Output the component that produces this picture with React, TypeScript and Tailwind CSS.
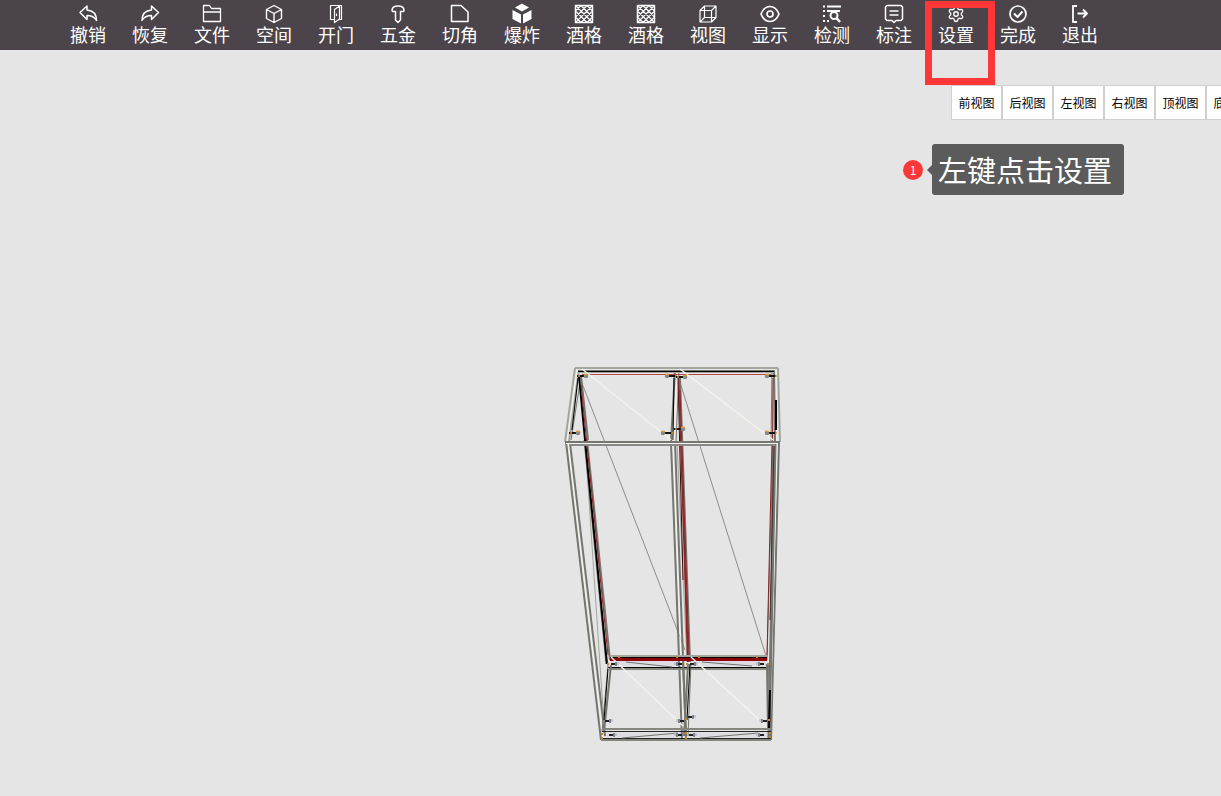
import type { ReactNode } from 'react'
import { Settings } from 'lucide-react'

type Tool = { id: string; label: string; icon: ReactNode }

const LATTICE = (
  <>
    <path d="M1.500 1.500h17v17h-17z" strokeWidth="1.500" />
    <path d="M1.500 7L7 1.500M1.500 13L13 1.500M1.500 18.500l17-17M7 18.500L18.500 7M13 18.500l5.500-5.500M13 1.500L18.500 7M7 1.500L18.500 13M1.500 1.500l17 17M1.500 7L13 18.500M1.500 13L7 18.500" strokeWidth="1.100" />
  </>
)

const TOOLS: Tool[] = [
  { id: 'undo', label: '撤销', icon: <path d="M2 8.500L9 2v4c5.500.5 9.500 4 9.500 10.500C16.500 13 13.500 11.500 9 11.500V15.500z" /> },
  { id: 'redo', label: '恢复', icon: <path d="M18.500 8.500L11.500 2v4C6 6.500 2 10 2 16.500 4 13 7 11.500 11.500 11.500V15.500z" /> },
  { id: 'file', label: '文件', icon: <path d="M1.500 17.500v-16h6l2 3h9v13zM1.500 8h17" strokeWidth="1.300" /> },
  { id: 'space', label: '空间', icon: <path d="M10 1.500l7.500 4v9L10 18.500l-7.500-4v-9zM2.500 5.500L10 9.500l7.500-4M10 9.500v9" strokeWidth="1.400" /> },
  { id: 'door', label: '开门', icon: <path d="M8.500 15.500h-4v-14h11v14h-2M8.500 5.500l5-3.500v13l-5 3.500zM10.500 9.500v2.500" strokeWidth="1.200" /> },
  { id: 'hardware', label: '五金', icon: <path d="M4 6.500C4 3.500 6.500 2 10 2s6 1.500 6 4.500l-.5 1h-3V16L10 18.500 7.500 16V7.500h-3z" strokeWidth="1.500" /> },
  { id: 'corner', label: '切角', icon: <path d="M1.500 1.500h9.500l7 6.500v9.500H1.500z" /> },
  {
    id: 'explode',
    label: '爆炸',
    icon: (
      <g fill="currentColor" stroke="none">
        <path d="M10 -.5l7 4-7 4-7-4z" />
        <path d="M.5 6l8.500 4.500v9L.5 15z" />
        <path d="M19.500 6L11 10.500v9l8.500-4.500z" />
      </g>
    ),
  },
  { id: 'wine-x', label: '酒格', icon: LATTICE },
  { id: 'wine-y', label: '酒格', icon: LATTICE },
  { id: 'view', label: '视图', icon: <path d="M2 6.500L6.500 2H18v11.500L13.500 18H2zM2 6.500h11.500V18M13.500 6.500L18 2M6.500 2v11.500H18M6.500 13.500L2 18" strokeWidth="1.200" /> },
  {
    id: 'show',
    label: '显示',
    icon: (
      <>
        <path d="M1 10c2-5 5-7.500 9-7.500S17 5 19 10c-2 5-5 7.500-9 7.500S3 15 1 10z" strokeWidth="1.700" />
        <circle cx="10" cy="10" r="3" strokeWidth="1.700" />
      </>
    ),
  },
  {
    id: 'check',
    label: '检测',
    icon: (
      <g strokeWidth="2">
        <path d="M1 2.500h2M5 2.500h14M1 7h2M5 7h13M1 12h2M1 17h2M5 17h2" />
        <circle cx="12" cy="11.500" r="3.500" />
        <path d="M14.500 14l3.500 4" strokeWidth="2.500" />
      </g>
    ),
  },
  { id: 'annotate', label: '标注', icon: <path d="M3 1.500h14l1.500 1.500v12L17 16.500h-5L10 18.500 8 16.500H3L1.500 15V3zM5.500 7h9M5.500 11h9" /> },
  { id: 'settings', label: '设置', icon: <Settings x={1} y={1} size={18} strokeWidth={1.8} /> },
  {
    id: 'done',
    label: '完成',
    icon: (
      <>
        <circle cx="10" cy="10" r="8" strokeWidth="1.700" />
        <path d="M6 9.500l3.500 3.500L14.500 7.500" strokeWidth="2" />
      </>
    ),
  },
  { id: 'exit', label: '退出', icon: <path d="M7 2H3v16h4M7.500 9.500h9M13 5.500l4 4-4 4" strokeWidth="1.800" /> },
]

const VIEWS = ['前视图', '后视图', '左视图', '右视图', '顶视图', '底视图']

const GREY = '#74766f'
const LIGHT = '#a3a59f'
const WHITE = '#f4f3ee'
const RED = '#8d2424'

// [x1, y1, x2, y2, colour, width]
type Edge = [number, number, number, number, string, number]

const EDGES: Edge[] = [
  // left side panel
  [575, 368, 565, 442, LIGHT, 2],
  [577, 370, 567, 442, WHITE, 1],
  [579, 370, 569, 442, LIGHT, 2],
  [581, 376, 571, 440, GREY, 1],
  [578, 378, 572, 430, '#000', 1],
  [566, 442, 601, 740, GREY, 2],
  [568, 442, 603, 738, WHITE, 1],
  [570, 443, 605, 736, GREY, 2],
  [586, 455, 604, 725, LIGHT, 1],
  [579, 376, 585, 440, '#000', 2],
  [584, 440, 606, 664, GREY, 1],
  [585, 440, 607, 664, '#000', 2],
  [581, 376, 588, 440, GREY, 2],
  [587, 440, 610, 660, GREY, 2],
  [581, 385, 608, 655, RED, 1],
  // middle partition
  [675, 370, 671, 442, GREY, 2],
  [674, 378, 673, 440, '#000', 1],
  [677, 370, 674, 442, WHITE, 1],
  [679, 370, 676, 442, GREY, 1],
  [671, 442, 682, 738, GREY, 2],
  [673, 442, 684, 738, WHITE, 1],
  [675, 442, 686, 738, GREY, 2],
  [677, 442, 687, 662, LIGHT, 1],
  [678, 376, 683, 580, '#350b0b', 1],
  [679, 380, 688, 662, RED, 2],
  [680, 378, 690, 662, GREY, 2],
  [680, 390, 689, 655, RED, 1],
  // right side panel
  [778, 368, 780, 442, LIGHT, 2],
  [776, 370, 777, 442, WHITE, 1],
  [774, 370, 775, 442, GREY, 2],
  [773, 378, 771, 650, RED, 1],
  [776, 400, 776, 430, '#000', 2],
  [772, 370, 771, 442, GREY, 1],
  [779, 442, 771, 740, GREY, 2],
  [777, 442, 770, 738, WHITE, 1],
  [775, 442, 769, 738, GREY, 3],
  [773, 442, 767, 660, GREY, 1],
  [772, 442, 767, 655, RED, 1],
  [774, 445, 770, 620, '#333', 1],
  // top board
  [575, 368, 778, 368, LIGHT, 2],
  [578, 370, 774, 370, GREY, 1],
  [578, 371, 774, 371, '#000', 1],
  [579, 372, 774, 372, LIGHT, 1],
  [582, 374, 771, 374, '#b64848', 1],
  [565, 442, 780, 442, GREY, 2],
  [566, 443, 778, 443, WHITE, 1],
  [570, 445, 775, 445, '#8b8a88', 2],
  // lower shelf
  [610, 656, 767, 656, LIGHT, 2],
  [610, 657, 767, 657, '#000', 1],
  [610, 659, 767, 659, '#900000', 3],
  [608, 667, 767, 667, '#000', 1],
  [609, 669, 767, 669, '#85877f', 2],
  // feet
  [611, 665, 604, 732, GREY, 2],
  [608, 665, 602, 732, GREY, 1],
  [608, 669, 604, 720, '#000', 1],
  [683, 662, 686, 736, GREY, 2],
  [691, 664, 688, 736, GREY, 1],
  [690, 664, 687, 720, '#000', 1],
  [688, 664, 684, 736, GREY, 2],
  [767, 664, 768, 730, GREY, 2],
  [769, 664, 770, 736, GREY, 2],
  [770, 690, 769, 728, '#000', 2],
  // bottom board
  [602, 729, 771, 729, '#85877f', 2],
  [602, 731, 771, 731, '#222', 1],
  [603, 738, 771, 738, '#222', 1],
  [601, 740, 771, 740, '#85877f', 2],
]

const BACK_DIAGONALS: Edge[] = [
  [580, 378, 685, 650, '#8c8e88', 1],
  [678, 376, 766, 656, '#8c8e88', 1],
]

const FRONT_DIAGONALS: Edge[] = [
  [582, 369, 671, 440, WHITE, 1.5],
  [680, 369, 773, 440, WHITE, 1.5],
  [611, 657, 683, 726, WHITE, 1.5],
  [691, 657, 766, 726, WHITE, 1.5],
  [626, 662, 672, 667, GREY, 1],
  [702, 662, 752, 666, GREY, 1],
  [622, 738, 678, 733, GREY, 1],
  [700, 738, 758, 733, GREY, 1],
]

// connector bolts: [x, y, direction the pin points]
const BOLTS: [number, number, number][] = [
  [586, 376, -1], [667, 376, 1], [685, 377, -1], [767, 376, 1],
  [578, 433, -1], [663, 433, 1], [683, 429, -1], [767, 433, 1],
]

const CAMS: [number, number, number][] = [
  [616, 664, -1], [677, 664, 1], [695, 664, -1], [759, 664, 1],
  [610, 721, -1], [679, 721, 1], [693, 717, -1], [762, 721, 1],
  [614, 735, -1], [677, 735, 1], [694, 735, -1], [759, 735, 1],
]

const PLUGS: [number, number][] = [
  [608, 664], [687, 664], [768, 664], [602, 734], [602, 738],
  [686, 719], [686, 733], [686, 738], [769, 720], [770, 733], [770, 737],
  [619, 657], [677, 657], [699, 657], [757, 657],
]

function Icon({ children }: { children: ReactNode }) {
  return (
    <svg viewBox="0 0 20 20" className="h-5 w-5 overflow-visible" fill="none" stroke="currentColor" strokeWidth="1.500" strokeLinejoin="round" aria-hidden="true">
      {children}
    </svg>
  )
}

function Lines({ edges }: { edges: Edge[] }) {
  return (
    <>
      {edges.map(([x1, y1, x2, y2, colour, width], i) => {
        // odd-width horizontals sit on the half pixel to stay crisp
        const shift = y1 === y2 && width % 2 === 1 ? 0.5 : 0
        return <line key={i} x1={x1} y1={y1 + shift} x2={x2} y2={y2 + shift} stroke={colour} strokeWidth={width} />
      })}
    </>
  )
}

function CabinetModel() {
  return (
    <svg viewBox="560 360 230 390" className="absolute left-[560px] top-[310px] h-[390px] w-[230px]" role="img" aria-label="柜体">
      <path d="M611 661h72v5h-72zM691 661h75v5h-75zM604 733h79v4h-79zM689 733h79v4h-79z" fill="#dedce2" />
      <Lines edges={BACK_DIAGONALS} />
      <Lines edges={EDGES} />
      <Lines edges={FRONT_DIAGONALS} />
      {BOLTS.map(([x, y, dir]) => (
        <g key={`${x}-${y}`}>
          <path d={`M${x} ${y}h${dir * 9}`} stroke="#111" strokeWidth="2" />
          <circle cx={x} cy={y} r="2.300" fill="#85888c" />
          <path d={`M${x - 2} ${y - 1.5}h4M${x + dir * 8} ${y}h2`} stroke="#d39a35" strokeWidth="1.500" />
        </g>
      ))}
      {CAMS.map(([x, y, dir]) => (
        <g key={`${x}-${y}`}>
          <path d={`M${x} ${y}h${dir * 5}`} stroke="#222" strokeWidth="2" />
          <path d={`M${x} ${y - 2}v4`} stroke="#7e858e" strokeWidth="2" />
          <path d={`M${x - dir * 2} ${y - 2}v3`} stroke="#b3bcc8" strokeWidth="1.500" />
        </g>
      ))}
      {PLUGS.map(([x, y]) => (
        <rect key={`${x}-${y}`} x={x - 1} y={y - 1} width="2" height="2" fill="#c08a25" />
      ))}
    </svg>
  )
}

export default function App() {
  return (
    <div className="relative flex min-h-screen flex-col overflow-hidden bg-[#e5e5e5] font-['Noto_Sans_CJK_SC',sans-serif]">
      <header className="flex h-[50px] shrink-0 bg-[#4b444b] pl-[57px] text-white">
        {TOOLS.map(t => (
          <button key={t.id} type="button" className="flex w-[62px] shrink-0 flex-col items-center pt-1">
            <Icon>{t.icon}</Icon>
            <span className="text-[18px] leading-5">{t.label}</span>
          </button>
        ))}
      </header>

      <main className="relative flex-1">
        <CabinetModel />

        {/* View switcher */}
        <nav className="absolute left-[951px] right-0 top-[35px] flex overflow-hidden">
          {VIEWS.map(v => (
            <button key={v} type="button" className="h-[35px] w-[51px] shrink-0 border border-[#cfcfcf] bg-white text-xs text-black">
              {v}
            </button>
          ))}
        </nav>

        {/* Step hint */}
        <div className="absolute left-[903px] top-[94px] flex items-center">
          <span className="flex h-5 w-5 items-center justify-center rounded-full bg-[#fd3737] text-xs text-white">1</span>
          <span className="ml-1 h-0 w-0 border-y-[5px] border-r-[5px] border-y-transparent border-r-[#5b5b5b]" />
          <p className="h-[51px] w-48 rounded-[3px] bg-[#5b5b5b] px-1.5 text-[29px] leading-[50px] text-white">左键点击设置</p>
        </div>
      </main>

      {/* Highlight round the settings tool */}
      <div className="pointer-events-none absolute left-[925px] top-px h-[84px] w-[70px] border-[7px] border-[#fd3737]" />
    </div>
  )
}
